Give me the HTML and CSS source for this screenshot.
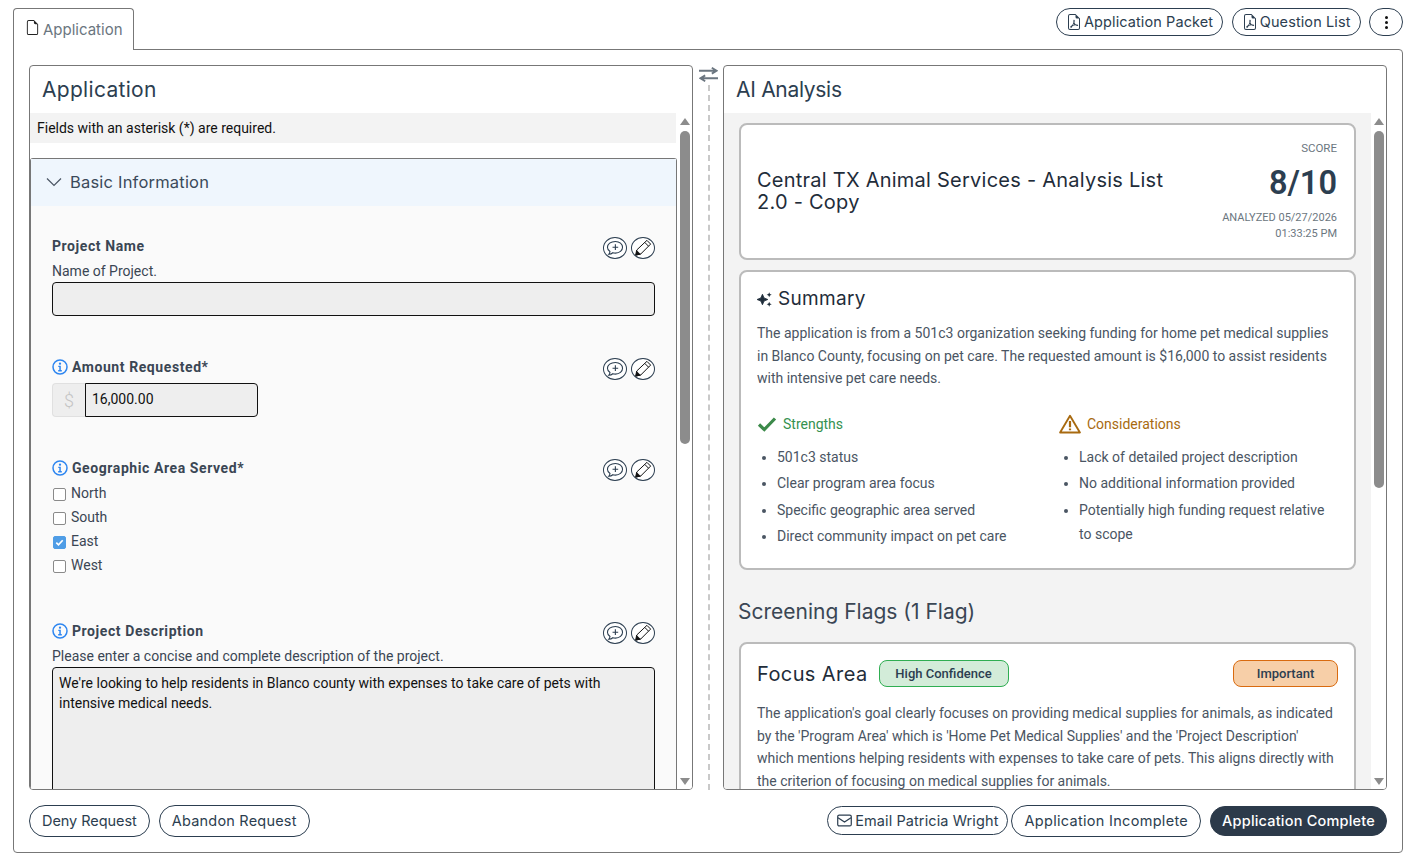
FILE: index.html
```html
<!DOCTYPE html>
<html lang="en">
<head>
<meta charset="utf-8">
<title>Application</title>
<link rel="stylesheet" href="styles.css">
</head>
<body>
<svg class="defs" width="0" height="0">
  <symbol id="i-file" viewBox="0 0 16 16"><path d="M14 4.500V14a2 2 0 0 1-2 2H4a2 2 0 0 1-2-2V2a2 2 0 0 1 2-2h5.500L14 4.500zm-3 0A1.500 1.500 0 0 1 9.500 3V1H4a1 1 0 0 0-1 1v12a1 1 0 0 0 1 1h8a1 1 0 0 0 1-1V4.500h-2z"/></symbol>
  <symbol id="i-pdf" viewBox="0 0 16 16"><path d="M14 14V4.500L9.500 0H4a2 2 0 0 0-2 2v12a2 2 0 0 0 2 2h8a2 2 0 0 0 2-2zM9.500 3A1.500 1.500 0 0 0 11 4.500h2V14a1 1 0 0 1-1 1H4a1 1 0 0 1-1-1V2a1 1 0 0 1 1-1h5.500v2z"/><path d="M4.600 13.200c-.7-.4-.3-1.100 1-1.700.6-.3 1.100-1 1.500-2 .3-.8.400-1.300.3-2.200-.1-.9.1-1.500.7-1.500.6 0 .8.700.5 1.900-.1.500-.2.800 0 1.300.3.600.7 1.100 1.300 1.500 1-.1 2.300 0 2.300.8 0 .8-1.400.8-2.700-.1-.9.100-2 .5-2.900.9-.8 1.500-1.500 2.400-2 2.100zm3.100-3.300-.6 1.300 1.300-.4-.7-.9z"/></symbol>
  <symbol id="i-mail" viewBox="0 0 16 14"><rect x=".7" y="1.200" width="14.600" height="11.600" rx="1.600" fill="none" stroke="currentColor" stroke-width="1.300"/><path d="M1 4l7 4.700L15 4" fill="none" stroke="currentColor" stroke-width="1.300"/></symbol>
  <symbol id="i-info" viewBox="0 0 16 16"><circle cx="8" cy="8" r="7" fill="none" stroke="currentColor" stroke-width="1.500"/><path d="M6.300 6.800h2.500v4.300h1v1.300H6.200v-1.300h1.100V8.100h-1zM8 3.500a1.150 1.150 0 1 1 0 2.300 1.150 1.150 0 0 1 0-2.300z"/></symbol>
  <symbol id="i-note" viewBox="0 0 22 22"><path d="M11.500 3.800c4.400 0 7.800 2.800 7.800 6.400s-3.400 6.400-7.800 6.400c-1 0-2-.1-2.900-.4-1 .9-2.500 1.600-4.500 1.700.8-.9 1.300-1.900 1.400-3-1.800-1.200-2.800-2.900-2.800-4.700 0-3.600 3.500-6.400 8.800-6.400z" fill="none" stroke="currentColor" stroke-width="1.200"/><path d="M11.400 7v6.200M8.300 10.100h6.200" fill="none" stroke="currentColor" stroke-width="1.200"/></symbol>
  <symbol id="i-pencil" viewBox="0 0 22 22"><path d="M15.300 2.600l4.100 4.100-10.900 10.900-5.600 1.200 1.200-5.600z" fill="none" stroke="currentColor" stroke-width="1.100" stroke-linejoin="round"/><path d="M3.900 13.200l4.900 4.900-5.900 1.200z" fill="currentColor"/><path d="M13 4.900l4.100 4.100" fill="none" stroke="currentColor" stroke-width="1.100"/></symbol>
  <symbol id="i-spark" viewBox="0 0 16 16"><path d="M5.800 2.400 7.500 6.300 11.500 8 7.500 9.700 5.800 13.600 4.100 9.700.1 8 4.100 6.300z" stroke="currentColor" stroke-width=".9" stroke-linejoin="round"/><path d="M13 .3l.8 1.900 1.900.8-1.900.8-.8 1.900-.8-1.900-1.900-.8 1.900-.8zM13 10.300l.8 1.900 1.900.8-1.900.8-.8 1.900-.8-1.900-1.900-.8 1.900-.8z"/></symbol>
  <symbol id="i-warn" viewBox="0 0 20 18"><path d="M10 1.500 19 16.700H1z" fill="none" stroke="currentColor" stroke-width="1.700" stroke-linejoin="round"/><path d="M10 6.200v5.800M10 13v1.600" fill="none" stroke="currentColor" stroke-width="2"/></symbol>
</svg>

<header class="top">
  <div class="tab">
    <svg class="ico-file"><use href="#i-file"/></svg>
    <span>Application</span>
  </div>
  <div class="top-actions">
    <button class="pill pill-top"><svg class="ico-pdf"><use href="#i-pdf"/></svg>Application Packet</button>
    <button class="pill pill-top"><svg class="ico-pdf"><use href="#i-pdf"/></svg>Question List</button>
    <button class="pill pill-more"><span class="dots"><i></i><i></i><i></i></span></button>
  </div>
</header>

<main class="frame">
  <div class="panes">
    <section class="pane">
      <h2 class="pane-title">Application</h2>
      <div class="pane-body">
        <div class="scroll-content">
          <div class="required-note">Fields with an asterisk (*) are required.</div>
          <div class="accordion">
            <div class="accordion-head">
              <svg class="chev" viewBox="0 0 16 10"><path d="M1 1.500l7 7 7-7" fill="none" stroke="currentColor" stroke-width="1.200"/></svg>
              <span>Basic Information</span>
            </div>
            <div class="accordion-body">
              <div class="field field-name">
                <div class="label-row">
                  <label class="flabel">Project Name</label>
                  <div class="round-actions">
                    <span class="round"><svg><use href="#i-note"/></svg></span>
                    <span class="round"><svg><use href="#i-pencil"/></svg></span>
                  </div>
                </div>
                <div class="hint">Name of Project.</div>
                <div class="input"></div>
              </div>
              <div class="field field-amount">
                <div class="label-row">
                  <label class="flabel"><svg class="info"><use href="#i-info"/></svg>Amount Requested*</label>
                  <div class="round-actions">
                    <span class="round"><svg><use href="#i-note"/></svg></span>
                    <span class="round"><svg><use href="#i-pencil"/></svg></span>
                  </div>
                </div>
                <div class="money">
                  <span class="addon">$</span>
                  <span class="input input-money">16,000.00</span>
                </div>
              </div>
              <div class="field field-geo">
                <div class="label-row">
                  <label class="flabel"><svg class="info"><use href="#i-info"/></svg>Geographic Area Served*</label>
                  <div class="round-actions">
                    <span class="round"><svg><use href="#i-note"/></svg></span>
                    <span class="round"><svg><use href="#i-pencil"/></svg></span>
                  </div>
                </div>
                <div class="opt"><span class="cb"></span>North</div>
                <div class="opt"><span class="cb"></span>South</div>
                <div class="opt"><span class="cb cb-on"><svg viewBox="0 0 12 12"><path d="M2.500 6.200l2.400 2.400 4.600-5" fill="none" stroke="#fff" stroke-width="1.800"/></svg></span>East</div>
                <div class="opt"><span class="cb"></span>West</div>
              </div>
              <div class="field field-desc">
                <div class="label-row">
                  <label class="flabel"><svg class="info"><use href="#i-info"/></svg>Project Description</label>
                  <div class="round-actions">
                    <span class="round"><svg><use href="#i-note"/></svg></span>
                    <span class="round"><svg><use href="#i-pencil"/></svg></span>
                  </div>
                </div>
                <div class="hint">Please enter a concise and complete description of the project.</div>
                <div class="input input-area">We're looking to help residents in Blanco county with expenses to take care of pets with intensive medical needs.</div>
              </div>
            </div>
          </div>
        </div>
        <div class="scrollbar">
          <span class="arrow-up"></span>
          <span class="thumb thumb-left"></span>
          <span class="arrow-down"></span>
        </div>
      </div>
    </section>

    <div class="divider">
      <svg class="swap" viewBox="0 0 19 15"><path d="M0 3.700H17M12.800.8 17.500 3.700 12.800 6.600M19 11.300H2M6.200 8.400 1.500 11.300 6.200 14.200" fill="none" stroke="#6b7680" stroke-width="1.900"/></svg>
      <span class="dash"></span>
    </div>

    <section class="pane">
      <h2 class="pane-title pane-title-ai">AI Analysis</h2>
      <div class="pane-body">
        <div class="scroll-content analysis">
          <article class="card card-score">
            <h3 class="score-title">Central TX Animal Services - Analysis List 2.0 - Copy</h3>
            <div class="score-side">
              <div class="meta">SCORE</div>
              <div class="score">8/10</div>
              <div class="meta meta-time">ANALYZED 05/27/2026<br>01:33:25 PM</div>
            </div>
          </article>
          <article class="card card-summary">
            <h3 class="card-h"><svg class="spark"><use href="#i-spark"/></svg>Summary</h3>
            <p class="copy">The application is from a 501c3 organization seeking funding for home pet medical supplies in Blanco County, focusing on pet care. The requested amount is $16,000 to assist residents with intensive pet care needs.</p>
            <div class="cols">
              <div class="col col-first">
                <div class="col-h ok"><svg class="check" viewBox="0 0 20 16"><path d="M2 8.500l5.300 5L18 2.500" fill="none" stroke="#3c8a4a" stroke-width="3.200"/></svg>Strengths</div>
                <ul>
                  <li>501c3 status</li>
                  <li>Clear program area focus</li>
                  <li>Specific geographic area served</li>
                  <li>Direct community impact on pet care</li>
                </ul>
              </div>
              <div class="col">
                <div class="col-h warn"><svg class="warn-ico"><use href="#i-warn"/></svg>Considerations</div>
                <ul>
                  <li>Lack of detailed project description</li>
                  <li>No additional information provided</li>
                  <li>Potentially high funding request relative to scope</li>
                </ul>
              </div>
            </div>
          </article>
          <h3 class="flags">Screening Flags (1 Flag)</h3>
          <article class="card card-flag">
            <div class="flag-head">
              <h3 class="flag-title">Focus Area</h3>
              <span class="badge badge-green">High Confidence</span>
              <span class="badge badge-orange">Important</span>
            </div>
            <p class="copy">The application's goal clearly focuses on providing medical supplies for animals, as indicated by the 'Program Area' which is 'Home Pet Medical Supplies' and the 'Project Description' which mentions helping residents with expenses to take care of pets. This aligns directly with the criterion of focusing on medical supplies for animals.</p>
          </article>
        </div>
        <div class="scrollbar">
          <span class="arrow-up"></span>
          <span class="thumb thumb-right"></span>
          <span class="arrow-down"></span>
        </div>
      </div>
    </section>
  </div>

  <footer class="foot">
    <button class="pill pill-foot pill-deny">Deny Request</button>
    <button class="pill pill-foot">Abandon Request</button>
    <span class="spacer"></span>
    <button class="pill pill-email"><svg class="ico-mail"><use href="#i-mail"/></svg>Email Patricia Wright</button>
    <button class="pill pill-foot pill-incomplete">Application Incomplete</button>
    <button class="pill pill-foot pill-dark">Application Complete</button>
  </footer>
</main>
</body>
</html>
```

FILE: styles.css
```css
* { box-sizing: border-box; }
html, body { margin: 0; height: 867px; overflow: hidden; background: #fff; }
body { font-family: Roboto, "Liberation Sans", sans-serif; font-size: 14px; color: #2c3e50; padding: 8px 11px 14px 13px; }
.defs { position: absolute; }
button { font: inherit; cursor: pointer; }
svg { fill: currentColor; flex: none; }

.top { display: flex; justify-content: space-between; height: 42px; position: relative; z-index: 1; }
.tab { width: 121px; height: 42px; border: 1px solid #777; border-bottom: 0; border-radius: 4px 4px 0 0; background: #fff; display: flex; align-items: flex-start; padding: 10px 0 0 11px; gap: 3px; font-family: Inter, sans-serif; font-size: 15px; color: #6b7680; letter-spacing: 0; line-height: 22px; }
.ico-file { width: 15px; height: 17px; color: #222; }
.top-actions { display: flex; gap: 8.500px; height: 28px; }

.pill { display: inline-flex; align-items: center; justify-content: center; height: 28px; padding: 0 9px 1px 10px; border: 1px solid #2c3e50; border-radius: 14px; background: #fff; color: #2c3e50; font-family: Inter, sans-serif; font-size: 14.500px; letter-spacing: 0.2px; white-space: nowrap; gap: 3px; }
.pill-top { padding-left: 9px; gap: 2px; letter-spacing: 0.1px; }
.ico-pdf { width: 16px; height: 16px; }
.pill-more { width: 34px; padding: 0; }
.dots { display: flex; flex-direction: column; gap: 2px; }
.dots i { width: 3px; height: 3px; background: #111; border-radius: 50%; }

.frame { height: 804px; margin-top: -1px; border: 1px solid #777; border-radius: 0 4px 4px 4px; padding: 15px; display: flex; flex-direction: column; }
.panes { display: flex; height: 725px; }
.pane { width: 664px; height: 725px; border: 1px solid #777; border-radius: 4px; display: flex; flex-direction: column; overflow: hidden; background: #fff; }
.pane-title { margin: 0; height: 47px; padding: 10px 0 0 12px; font-family: Inter, sans-serif; font-weight: 400; font-size: 21px; line-height: 27px; letter-spacing: 0.3px; color: #2c3e50; }
.pane-title-ai { letter-spacing: -0.3px; }
.pane-body { flex: 1; display: flex; min-height: 0; }
.scroll-content { flex: 1; min-width: 0; overflow: hidden; }

.required-note { height: 30px; margin-right: 1px; background: #f3f3f3; color: #111; padding: 0 7px; line-height: 30px; font-size: 14px; }
.accordion { margin: 15px 0 0 0; border: 1px solid #777; border-bottom: 0; border-radius: 3px 3px 0 0; background: #fafafa; }
.accordion-head { height: 47px; background: #eff6fd; display: flex; align-items: center; gap: 8px; padding: 0 0 2px 15px; font-family: Inter, sans-serif; font-size: 16.500px; letter-spacing: 0.2px; color: #3b4a5a; }
.chev { width: 16px; height: 10px; color: #4a5563; }
.accordion-body { padding: 29px 21px 0 21px; }

.field { position: relative; }
.field-name { height: 121px; }
.field-amount { height: 101px; }
.field-geo { height: 163px; }
.label-row { display: flex; justify-content: space-between; align-items: center; height: 24px; }
.flabel { display: flex; align-items: center; gap: 4px; margin-top: -2px; font-weight: 700; font-size: 14px; letter-spacing: 0.58px; color: #3a4654; }
.info { width: 16px; height: 16px; color: #2e86f0; }
.round-actions { display: flex; gap: 4px; margin-top: 2px; }
.round { width: 24px; height: 22px; border: 1px solid #2c3e50; border-radius: 50%; display: flex; align-items: center; justify-content: center; background: #fff; color: #2c3e50; }
.round svg { width: 20px; height: 20px; }
.round + .round svg { color: #111; }
.hint { margin-top: 2px; height: 21px; line-height: 20px; font-size: 14px; color: #3a4654; }
.input { display: block; height: 34px; background: #eee; border: 1px solid #111; border-radius: 4px; color: #111; }
.money { display: flex; margin-top: 3px; height: 34px; }
.addon { width: 33px; height: 34px; background: #eee; border: 1px solid #e0e0e0; border-right: 0; border-radius: 4px 0 0 4px; color: #c4c4c4; font-size: 18px; font-weight: 300; display: flex; align-items: center; justify-content: center; }
.input-money { width: 173px; border-radius: 0 4px 4px 0; line-height: 30px; padding-left: 6px; font-size: 14px; }
.opt { height: 24px; display: flex; align-items: center; gap: 5px; padding-left: 1px; font-size: 14px; color: #3a4654; }
.cb { width: 13px; height: 13px; margin-top: 2px; border: 1px solid #8a8a8a; border-radius: 2px; background: #fff; display: flex; }
.cb-on { background: #4f9de6; border-color: #4f9de6; }
.cb-on svg { width: 11px; height: 11px; }
.field-desc .hint { margin-top: 2px; height: 22px; }
.input-area { height: 180px; padding: 5px 6px; line-height: 20px; font-size: 14px; margin-top: -1px; }

.scrollbar { width: 14px; flex: none; position: relative; background: #fff; display: flex; flex-direction: column; align-items: center; padding-top: 5px; margin-left: 1px; }
.arrow-up { width: 0; height: 0; border-left: 5px solid transparent; border-right: 5px solid transparent; border-bottom: 7px solid #8c8c8c; }
.thumb { width: 10px; border-radius: 5px; background: #8c8c8c; margin-top: 6px; }
.thumb-left { height: 313px; }
.thumb-right { height: 357px; }
.arrow-down { position: absolute; bottom: 4px; width: 0; height: 0; border-left: 5px solid transparent; border-right: 5px solid transparent; border-top: 7px solid #8c8c8c; }

.divider { width: 30px; flex: none; display: flex; flex-direction: column; align-items: center; }
.swap { width: 19px; height: 15px; margin-top: 2px; }
.dash { flex: 1; width: 0; margin: 3px 0 0 1px; border-left: 2px dashed #c9c9c9; }

.analysis { background: #f3f3f3; padding: 10px 15px 0; }
.card { background: #fff; border: 2px solid #bbb; border-radius: 8px; }
.card-score { height: 137px; display: flex; justify-content: space-between; align-items: flex-start; padding: 15px 17px 0 16px; }
.score-title { margin: 29px 0 0; width: 430px; font-family: Inter, sans-serif; font-weight: 400; font-size: 20px; line-height: 22px; color: #1f2d3a; letter-spacing: 0.24px; }
.score-side { text-align: right; }
.meta { font-size: 11.500px; line-height: 16px; color: #6b7680; }
.score { font-size: 32.500px; font-weight: 600; color: #2c3e50; line-height: 40px; margin-top: 7px; }
.meta-time { margin-top: 7px; font-size: 11px; }
.card-summary { height: 300px; margin-top: 10px; padding: 14px 16px 0; }
.card-h { margin: 0; display: flex; align-items: center; gap: 6px; font-family: Inter, sans-serif; font-weight: 400; font-size: 19px; letter-spacing: 0.3px; line-height: 26px; color: #1f2d3a; }
.spark { width: 15px; height: 15px; }
.copy { margin: 0; font-size: 14px; line-height: 22.500px; color: #4a5563; }
.card-summary .copy { margin-top: 10px; }
.cols { display: flex; margin-top: 22px; }
.col { flex: 1; min-width: 0; }
.col-first { flex: 0 0 302px; }
.col-h { display: flex; align-items: center; gap: 6px; height: 24px; font-size: 14px; }
.ok { color: #35914f; }
.warn { color: #a86a10; }
.check { width: 20px; height: 16px; }
.warn-ico { width: 22px; height: 20px; }
ul { margin: 9px 0 0; padding: 0 0 0 20px; color: #4a5563; font-size: 14px; line-height: 24px; }
li { margin-bottom: 2.500px; }
.flags { margin: 27px 0 0 -1px; font-family: Inter, sans-serif; font-weight: 400; font-size: 21px; line-height: 30px; color: #3a4654; }
.card-flag { margin-top: 15px; padding: 15px 16px 0; height: 190px; }
.flag-head { display: flex; align-items: center; height: 28px; }
.flag-title { margin: 2px 11px 0 0; font-family: Inter, sans-serif; font-weight: 400; font-size: 20px; letter-spacing: 0.4px; color: #1f2d3a; }
.badge { height: 27px; border-radius: 8px; display: flex; align-items: center; justify-content: center; font-size: 13px; font-weight: 500; color: #2c3e50; }
.badge-green { width: 130px; background: #d3ecd9; border: 1px solid #2fae52; }
.badge-orange { width: 105px; margin-left: auto; background: #f7cfa8; border: 1px solid #d96b10; }
.card-flag .copy { margin-top: 15px; }

.foot { display: flex; align-items: center; margin-top: 15px; height: 32px; gap: 9px; }
.spacer { flex: 1; }
.pill-foot { height: 32px; border-radius: 16px; padding: 0 12px 1px; }
.pill-deny { letter-spacing: -0.05px; }
.pill-incomplete { letter-spacing: 0.3px; }
.pill-email { height: 29px; border-radius: 15px; padding: 0 9px 1px; margin: 0 -6px 1px 0; gap: 3px; letter-spacing: 0.1px; }
.ico-mail { width: 15px; height: 13px; }
.pill-dark { height: 30px; padding: 0 11px 1px; background: #2c3a4a; color: #fff; border-color: #2c3a4a; font-weight: 500; }
```
